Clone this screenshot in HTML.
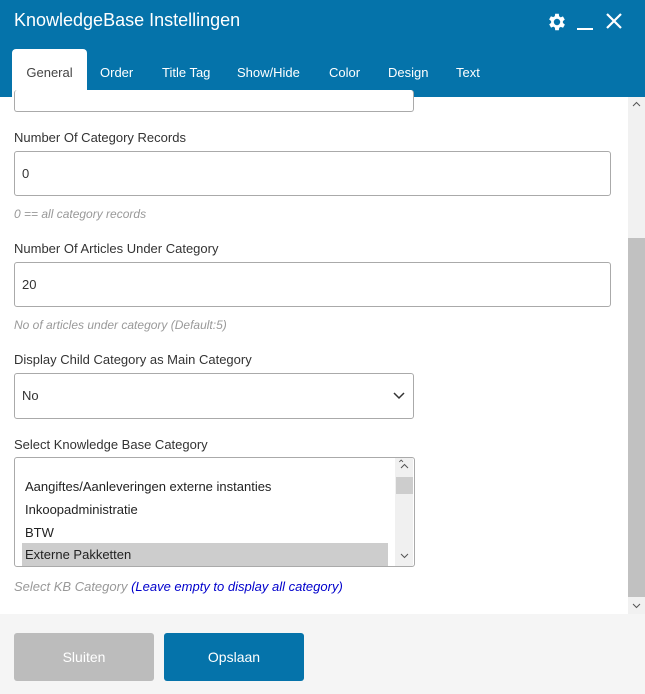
<!DOCTYPE html>
<html><head><style>
*{box-sizing:border-box;margin:0;padding:0}
body{width:645px;height:694px;overflow:hidden;font-family:"Liberation Sans",sans-serif;background:#fff;position:relative;color:#333}
.hdr{position:absolute;left:0;top:0;width:645px;height:97px;background:#0573aa}
.title{position:absolute;left:14px;top:10px;color:#fff;font-size:18px}
.tab{position:absolute;top:65px;color:#fff;font-size:13px}
.tab.act{top:49px;left:12px;width:75px;height:48px;background:#fff;border-radius:4px 4px 0 0;color:#444;padding-top:16px;text-align:center}
.lbl{position:absolute;left:14px;font-size:13px;color:#333}
.inp{position:absolute;left:14px;border:1px solid #aaa;border-radius:3px;background:#fff;font-size:13px;padding-left:7px;color:#333}
.hint{position:absolute;left:14px;font-size:12px;font-style:italic;color:#999}
.sb{position:absolute;left:628px;top:97px;width:17px;height:517px;background:#f1f1f1}
.thumb{position:absolute;left:628px;top:238px;width:17px;height:359px;background:#c1c1c1}
.ftr{position:absolute;left:0;top:614px;width:645px;height:80px;background:#f5f5f5}
.btn{position:absolute;top:633px;width:140px;height:48px;border-radius:3px;color:#fff;font-size:14px;text-align:center;line-height:48px}
.opt{position:absolute;left:22px;width:366px;height:23px;font-size:13px;padding-left:3px;line-height:23px;color:#222}
</style></head><body>
<div class="hdr">
<div class="title">KnowledgeBase Instellingen</div>
<svg style="position:absolute;left:546px;top:11px" width="22" height="22" viewBox="0 0 24 24"><path fill="#fff" d="M19.4 13a7.5 7.5 0 0 0 0-2l2.1-1.6-2-3.5-2.5 1a7 7 0 0 0-1.7-1L15 3h-4l-.4 2.7a7 7 0 0 0-1.7 1l-2.5-1-2 3.5L6.6 11a7.5 7.5 0 0 0 0 2l-2.1 1.6 2 3.5 2.5-1a7 7 0 0 0 1.7 1L11 21h4l.4-2.7a7 7 0 0 0 1.7-1l2.5 1 2-3.5zM13 15.5a3.5 3.5 0 1 1 0-7 3.5 3.5 0 0 1 0 7z" transform="translate(-1 0)"/></svg>
<div style="position:absolute;left:577px;top:28px;width:16px;height:2px;background:#fff"></div>
<svg style="position:absolute;left:606px;top:13px" width="16" height="16" viewBox="0 0 16 16"><path d="M1 1L15 15M15 1L1 15" stroke="#fff" stroke-width="2.2"/></svg>
<div class="tab act">General</div>
<div class="tab" style="left:100px">Order</div>
<div class="tab" style="left:162px">Title Tag</div>
<div class="tab" style="left:237px">Show/Hide</div>
<div class="tab" style="left:329px">Color</div>
<div class="tab" style="left:388px">Design</div>
<div class="tab" style="left:456px">Text</div>
</div>
<div class="inp" style="top:90px;width:400px;height:22px;border-top:none"></div>
<div class="lbl" style="top:130px">Number Of Category Records</div>
<div class="inp" style="top:151px;width:597px;height:45px;line-height:43px">0</div>
<div class="hint" style="top:207px">0 == all category records</div>
<div class="lbl" style="top:241px">Number Of Articles Under Category</div>
<div class="inp" style="top:262px;width:597px;height:45px;line-height:43px">20</div>
<div class="hint" style="top:318px">No of articles under category (Default:5)</div>
<div class="lbl" style="top:352px">Display Child Category as Main Category</div>
<div class="inp" style="top:373px;width:400px;height:46px;line-height:44px">No
<svg style="position:absolute;right:8px;top:18px" width="12" height="8" viewBox="0 0 12 8"><path d="M1 1l5 5 5-5" stroke="#333" stroke-width="1.5" fill="none"/></svg></div>
<div class="lbl" style="top:437px">Select Knowledge Base Category</div>
<div class="inp" style="top:457px;width:401px;height:110px;padding:0"></div>
<div style="position:absolute;left:395px;top:458px;width:18px;height:108px;background:#f0f0f0"></div>
<div style="position:absolute;left:396px;top:477px;width:17px;height:17px;background:#cdcdcd"></div>
<div style="position:absolute;left:397px;top:459px;font-size:10px;color:#555">&#8963;</div>
<svg style="position:absolute;left:400px;top:553px" width="9" height="6"><path d="M1 1l3.5 3.5L8 1" stroke="#555" fill="none"/></svg>
<svg style="position:absolute;left:400px;top:463px" width="9" height="6"><path d="M1 5l3.5-3.5L8 5" stroke="#555" fill="none"/></svg>
<div class="opt" style="top:475px">Aangiftes/Aanleveringen externe instanties</div>
<div class="opt" style="top:498px">Inkoopadministratie</div>
<div class="opt" style="top:521px">BTW</div>
<div class="opt" style="top:543px;background:#cdcdcd;height:23px">Externe Pakketten</div>
<div class="hint" style="top:579px;font-size:13px">Select KB Category <span style="color:#00c">(Leave empty to display all category)</span></div>
<div class="sb"></div><div class="thumb"></div>
<svg style="position:absolute;left:632px;top:101px" width="9" height="6"><path d="M1 5l3.5-3.5L8 5" stroke="#555" fill="none"/></svg>
<svg style="position:absolute;left:632px;top:603px" width="9" height="6"><path d="M1 1l3.5 3.5L8 1" stroke="#555" fill="none"/></svg>
<div class="ftr"></div>
<div class="btn" style="left:14px;background:#bcbcbc">Sluiten</div>
<div class="btn" style="left:164px;background:#0573aa">Opslaan</div>
</body></html>
